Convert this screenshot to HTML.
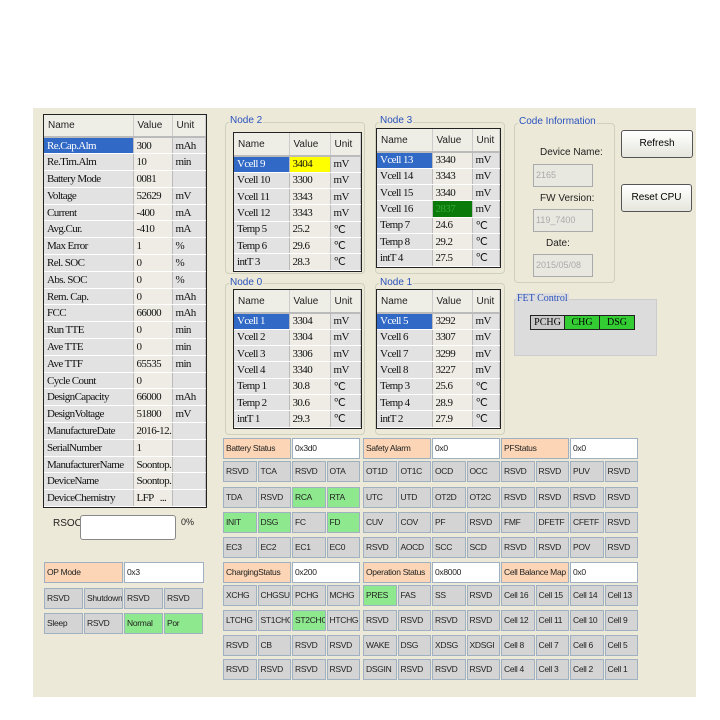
<!DOCTYPE html>
<html><head><meta charset="utf-8"><style>
*{box-sizing:border-box;margin:0;padding:0}
body{width:720px;height:720px;background:#fff;position:relative;overflow:hidden;font-family:"Liberation Sans",sans-serif;}
.panel{position:absolute;left:33px;top:108px;width:663px;height:589px;background:#ece9d8;}
.a{position:absolute}
table{border-collapse:collapse;table-layout:fixed;position:absolute;background:#fff;outline:1px solid #222;}
td{font-family:"Liberation Serif",serif;font-size:11px;letter-spacing:-0.6px;padding-left:3px;white-space:nowrap;overflow:hidden;border-bottom:1px solid #fff;border-right:1px solid #bbb;background:#e2e2e2;color:#111}
td.v{background:#eeece4}
th{font-size:10px;font-weight:normal;text-align:left;padding-left:4px;background:#efeee6;border-right:1px solid #ccc;border-bottom:2px solid #bbb;color:#222}
td.sel{background:#3169c6;color:#fff}
.grp{position:absolute;border:1px solid #d0d0bf;border-radius:4px}
.lbl{position:absolute;font-size:10px;color:#2a52be;background:#ece9d8;padding:0 1px}
.row{position:absolute;display:flex;height:21px}
.c{width:33.5px;flex:none;height:21px;border:1px solid #9fb0c2;background:#d4d4d4;font-size:8.5px;letter-spacing:-0.3px;line-height:19px;padding-left:2px;margin-right:1px;color:#222;white-space:nowrap;overflow:hidden}
.g{background:#8ee88e}
.h{width:68px;background:#fbd5b5}
.w{width:68px;background:#fff}
.btn{position:absolute;border:1px solid #555;border-radius:3px;background:linear-gradient(#fff,#e6e6dd);font-size:10px;text-align:center}
.inp{position:absolute;border:1px solid #aaa;background:#e8e8e0;color:#aaa;font-size:9px;padding-left:2px}
.t{position:absolute;font-size:10px;color:#222}
</style></head><body>
<div class="panel"></div>

<table style="left:44px;top:115px;width:161px">
<colgroup><col style="width:89px"><col style="width:39px"><col style="width:33px"></colgroup>
<tr style="height:22px"><th>Name</th><th>Value</th><th>Unit</th></tr>
<tr style="height:16.8px"><td class="sel">Re.Cap.Alm</td><td class="v">300</td><td>mAh</td></tr>
<tr style="height:16.8px"><td>Re.Tim.Alm</td><td class="v">10</td><td>min</td></tr>
<tr style="height:16.8px"><td>Battery Mode</td><td class="v">0081</td><td></td></tr>
<tr style="height:16.8px"><td>Voltage</td><td class="v">52629</td><td>mV</td></tr>
<tr style="height:16.8px"><td>Current</td><td class="v">-400</td><td>mA</td></tr>
<tr style="height:16.8px"><td>Avg.Cur.</td><td class="v">-410</td><td>mA</td></tr>
<tr style="height:16.8px"><td>Max Error</td><td class="v">1</td><td>%</td></tr>
<tr style="height:16.8px"><td>Rel. SOC</td><td class="v">0</td><td>%</td></tr>
<tr style="height:16.8px"><td>Abs. SOC</td><td class="v">0</td><td>%</td></tr>
<tr style="height:16.8px"><td>Rem. Cap.</td><td class="v">0</td><td>mAh</td></tr>
<tr style="height:16.8px"><td>FCC</td><td class="v">66000</td><td>mAh</td></tr>
<tr style="height:16.8px"><td>Run TTE</td><td class="v">0</td><td>min</td></tr>
<tr style="height:16.8px"><td>Ave TTE</td><td class="v">0</td><td>min</td></tr>
<tr style="height:16.8px"><td>Ave TTF</td><td class="v">65535</td><td>min</td></tr>
<tr style="height:16.8px"><td>Cycle Count</td><td class="v">0</td><td></td></tr>
<tr style="height:16.8px"><td>DesignCapacity</td><td class="v">66000</td><td>mAh</td></tr>
<tr style="height:16.8px"><td>DesignVoltage</td><td class="v">51800</td><td>mV</td></tr>
<tr style="height:16.8px"><td>ManufactureDate</td><td class="v">2016-12...</td><td></td></tr>
<tr style="height:16.8px"><td>SerialNumber</td><td class="v">1</td><td></td></tr>
<tr style="height:16.8px"><td>ManufacturerName</td><td class="v">Soontop...</td><td></td></tr>
<tr style="height:16.8px"><td>DeviceName</td><td class="v">Soontop...</td><td></td></tr>
<tr style="height:16.8px"><td>DeviceChemistry</td><td class="v">LFP &nbsp;&nbsp;...</td><td></td></tr>
</table>

<div class="grp" style="left:225px;top:122px;width:140px;height:152px"></div>
<div class="lbl" style="left:229px;top:115px">Node 2</div>
<div class="grp" style="left:375px;top:122px;width:130px;height:152px"></div>
<div class="lbl" style="left:379px;top:115px">Node 3</div>
<div class="grp" style="left:225px;top:283px;width:140px;height:152px"></div>
<div class="lbl" style="left:229px;top:277px">Node 0</div>
<div class="grp" style="left:375px;top:283px;width:130px;height:152px"></div>
<div class="lbl" style="left:379px;top:277px">Node 1</div>

<table style="left:234px;top:133px;width:126px">
<colgroup><col style="width:55px"><col style="width:41px"><col style="width:30px"></colgroup>
<tr style="height:23px"><th>Name</th><th>Value</th><th>Unit</th></tr>
<tr style="height:16.3px"><td class="sel">Vcell 9</td><td class="v" style="background:#ff0">3404</td><td>mV</td></tr>
<tr style="height:16.3px"><td>Vcell 10</td><td class="v">3300</td><td>mV</td></tr>
<tr style="height:16.3px"><td>Vcell 11</td><td class="v">3343</td><td>mV</td></tr>
<tr style="height:16.3px"><td>Vcell 12</td><td class="v">3343</td><td>mV</td></tr>
<tr style="height:16.3px"><td>Temp 5</td><td class="v">25.2</td><td>℃</td></tr>
<tr style="height:16.3px"><td>Temp 6</td><td class="v">29.6</td><td>℃</td></tr>
<tr style="height:16.3px"><td>intT 3</td><td class="v">28.3</td><td>℃</td></tr>
</table>
<table style="left:377px;top:129px;width:122px">
<colgroup><col style="width:55px"><col style="width:40px"><col style="width:27px"></colgroup>
<tr style="height:23px"><th>Name</th><th>Value</th><th>Unit</th></tr>
<tr style="height:16.3px"><td class="sel">Vcell 13</td><td class="v">3340</td><td>mV</td></tr>
<tr style="height:16.3px"><td>Vcell 14</td><td class="v">3343</td><td>mV</td></tr>
<tr style="height:16.3px"><td>Vcell 15</td><td class="v">3340</td><td>mV</td></tr>
<tr style="height:16.3px"><td>Vcell 16</td><td class="v" style="background:#0a7a0a;color:#3a3">2837</td><td>mV</td></tr>
<tr style="height:16.3px"><td>Temp 7</td><td class="v">24.6</td><td>℃</td></tr>
<tr style="height:16.3px"><td>Temp 8</td><td class="v">29.2</td><td>℃</td></tr>
<tr style="height:16.3px"><td>intT 4</td><td class="v">27.5</td><td>℃</td></tr>
</table>
<table style="left:234px;top:290px;width:126px">
<colgroup><col style="width:55px"><col style="width:41px"><col style="width:30px"></colgroup>
<tr style="height:23px"><th>Name</th><th>Value</th><th>Unit</th></tr>
<tr style="height:16.3px"><td class="sel">Vcell 1</td><td class="v">3304</td><td>mV</td></tr>
<tr style="height:16.3px"><td>Vcell 2</td><td class="v">3304</td><td>mV</td></tr>
<tr style="height:16.3px"><td>Vcell 3</td><td class="v">3306</td><td>mV</td></tr>
<tr style="height:16.3px"><td>Vcell 4</td><td class="v">3340</td><td>mV</td></tr>
<tr style="height:16.3px"><td>Temp 1</td><td class="v">30.8</td><td>℃</td></tr>
<tr style="height:16.3px"><td>Temp 2</td><td class="v">30.6</td><td>℃</td></tr>
<tr style="height:16.3px"><td>intT 1</td><td class="v">29.3</td><td>℃</td></tr>
</table>
<table style="left:377px;top:290px;width:122px">
<colgroup><col style="width:55px"><col style="width:40px"><col style="width:27px"></colgroup>
<tr style="height:23px"><th>Name</th><th>Value</th><th>Unit</th></tr>
<tr style="height:16.3px"><td class="sel">Vcell 5</td><td class="v">3292</td><td>mV</td></tr>
<tr style="height:16.3px"><td>Vcell 6</td><td class="v">3307</td><td>mV</td></tr>
<tr style="height:16.3px"><td>Vcell 7</td><td class="v">3299</td><td>mV</td></tr>
<tr style="height:16.3px"><td>Vcell 8</td><td class="v">3227</td><td>mV</td></tr>
<tr style="height:16.3px"><td>Temp 3</td><td class="v">25.6</td><td>℃</td></tr>
<tr style="height:16.3px"><td>Temp 4</td><td class="v">28.9</td><td>℃</td></tr>
<tr style="height:16.3px"><td>intT 2</td><td class="v">27.9</td><td>℃</td></tr>
</table>

<div class="grp" style="left:514px;top:123px;width:101px;height:160px"></div>
<div class="lbl" style="left:518px;top:116px">Code Information</div>
<div class="t" style="left:540px;top:147px">Device Name:</div>
<div class="inp" style="left:533px;top:164px;width:60px;height:23px;line-height:21px">2165</div>
<div class="t" style="left:540px;top:193px">FW Version:</div>
<div class="inp" style="left:533px;top:209px;width:60px;height:23px;line-height:21px">119_7400</div>
<div class="t" style="left:546px;top:238px">Date:</div>
<div class="inp" style="left:533px;top:254px;width:60px;height:23px;line-height:21px">2015/05/08</div>
<div class="btn" style="left:621px;top:130px;width:72px;height:28px;line-height:26px">Refresh</div>
<div class="btn" style="left:621px;top:184px;width:71px;height:28px;line-height:26px">Reset CPU</div>
<div class="a" style="left:514px;top:299px;width:143px;height:57px;background:#dcdcdc;border:1px solid #ccc"></div>
<div class="lbl" style="left:516px;top:293px;background:#dcdcdc;font-family:'Liberation Serif',serif">FET Control</div>
<div class="a" style="left:530px;top:315px;display:flex;border:1px solid #222;font-family:'Liberation Serif',serif;font-size:10px;text-align:center;line-height:13px">
<div style="width:34px;background:#c8c8c8;border-right:1px solid #222">PCHG</div><div style="width:35px;background:#33cc33;border-right:1px solid #222">CHG</div><div style="width:34px;background:#33cc33">DSG</div></div>

<div class="t" style="left:53px;top:518px">RSOC</div>
<div class="a" style="left:80px;top:515px;width:96px;height:25px;background:#fff;border:1px solid #888;border-radius:3px"></div>
<div class="t" style="left:181px;top:517px;font-size:9px">0%</div>
<div class="row" style="left:44px;top:562px"><div class="c h" style="width:79px">OP Mode</div><div class="c w" style="width:80px">0x3</div></div>
<div class="row" style="left:44px;top:588px"><div class="c" style="width:39px">RSVD</div><div class="c" style="width:39px">Shutdown</div><div class="c" style="width:39px">RSVD</div><div class="c" style="width:39px">RSVD</div></div>
<div class="row" style="left:44px;top:613px"><div class="c" style="width:39px">Sleep</div><div class="c" style="width:39px">RSVD</div><div class="c g" style="width:39px">Normal</div><div class="c g" style="width:39px">Por</div></div>

<div class="row" style="left:223px;top:438px"><div class="c h">Battery Status</div><div class="c w">0x3d0</div></div>
<div class="row" style="left:223px;top:461px"><div class="c">RSVD</div><div class="c">TCA</div><div class="c">RSVD</div><div class="c">OTA</div></div>
<div class="row" style="left:223px;top:487px"><div class="c">TDA</div><div class="c">RSVD</div><div class="c g">RCA</div><div class="c g">RTA</div></div>
<div class="row" style="left:223px;top:512px"><div class="c g">INIT</div><div class="c g">DSG</div><div class="c">FC</div><div class="c g">FD</div></div>
<div class="row" style="left:223px;top:537px"><div class="c">EC3</div><div class="c">EC2</div><div class="c">EC1</div><div class="c">EC0</div></div>
<div class="row" style="left:223px;top:562px"><div class="c h">ChargingStatus</div><div class="c w">0x200</div></div>
<div class="row" style="left:223px;top:585px"><div class="c">XCHG</div><div class="c">CHGSUP</div><div class="c">PCHG</div><div class="c">MCHG</div></div>
<div class="row" style="left:223px;top:610px"><div class="c">LTCHG</div><div class="c">ST1CHG</div><div class="c g">ST2CHG</div><div class="c">HTCHG</div></div>
<div class="row" style="left:223px;top:635px"><div class="c">RSVD</div><div class="c">CB</div><div class="c">RSVD</div><div class="c">RSVD</div></div>
<div class="row" style="left:223px;top:659px"><div class="c">RSVD</div><div class="c">RSVD</div><div class="c">RSVD</div><div class="c">RSVD</div></div>

<div class="row" style="left:363px;top:438px"><div class="c h">Safety Alarm</div><div class="c w">0x0</div></div>
<div class="row" style="left:363px;top:461px"><div class="c">OT1D</div><div class="c">OT1C</div><div class="c">OCD</div><div class="c">OCC</div></div>
<div class="row" style="left:363px;top:487px"><div class="c">UTC</div><div class="c">UTD</div><div class="c">OT2D</div><div class="c">OT2C</div></div>
<div class="row" style="left:363px;top:512px"><div class="c">CUV</div><div class="c">COV</div><div class="c">PF</div><div class="c">RSVD</div></div>
<div class="row" style="left:363px;top:537px"><div class="c">RSVD</div><div class="c">AOCD</div><div class="c">SCC</div><div class="c">SCD</div></div>
<div class="row" style="left:363px;top:562px"><div class="c h">Operation Status</div><div class="c w">0x8000</div></div>
<div class="row" style="left:363px;top:585px"><div class="c g">PRES</div><div class="c">FAS</div><div class="c">SS</div><div class="c">RSVD</div></div>
<div class="row" style="left:363px;top:610px"><div class="c">RSVD</div><div class="c">RSVD</div><div class="c">RSVD</div><div class="c">RSVD</div></div>
<div class="row" style="left:363px;top:635px"><div class="c">WAKE</div><div class="c">DSG</div><div class="c">XDSG</div><div class="c">XDSGI</div></div>
<div class="row" style="left:363px;top:659px"><div class="c">DSGIN</div><div class="c">RSVD</div><div class="c">RSVD</div><div class="c">RSVD</div></div>

<div class="row" style="left:501px;top:438px"><div class="c h">PFStatus</div><div class="c w">0x0</div></div>
<div class="row" style="left:501px;top:461px"><div class="c">RSVD</div><div class="c">RSVD</div><div class="c">PUV</div><div class="c">RSVD</div></div>
<div class="row" style="left:501px;top:487px"><div class="c">RSVD</div><div class="c">RSVD</div><div class="c">RSVD</div><div class="c">RSVD</div></div>
<div class="row" style="left:501px;top:512px"><div class="c">FMF</div><div class="c">DFETF</div><div class="c">CFETF</div><div class="c">RSVD</div></div>
<div class="row" style="left:501px;top:537px"><div class="c">RSVD</div><div class="c">RSVD</div><div class="c">POV</div><div class="c">RSVD</div></div>
<div class="row" style="left:501px;top:562px"><div class="c h">Cell Balance Map</div><div class="c w">0x0</div></div>
<div class="row" style="left:501px;top:585px"><div class="c">Cell 16</div><div class="c">Cell 15</div><div class="c">Cell 14</div><div class="c">Cell 13</div></div>
<div class="row" style="left:501px;top:610px"><div class="c">Cell 12</div><div class="c">Cell 11</div><div class="c">Cell 10</div><div class="c">Cell 9</div></div>
<div class="row" style="left:501px;top:635px"><div class="c">Cell 8</div><div class="c">Cell 7</div><div class="c">Cell 6</div><div class="c">Cell 5</div></div>
<div class="row" style="left:501px;top:659px"><div class="c">Cell 4</div><div class="c">Cell 3</div><div class="c">Cell 2</div><div class="c">Cell 1</div></div>
</body></html>
